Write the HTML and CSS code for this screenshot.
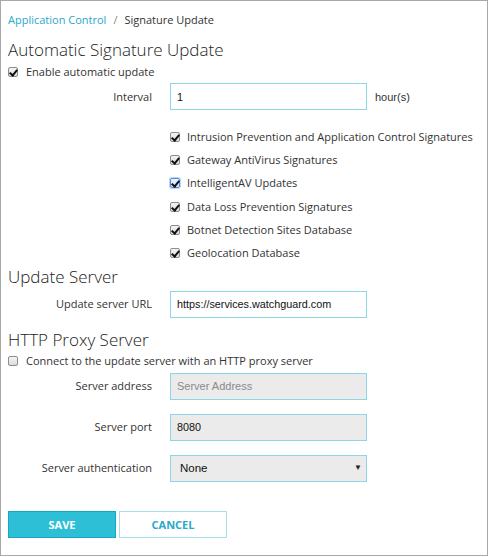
FILE: index.html
```html
<!DOCTYPE html>
<html>
<head>
<meta charset="utf-8">
<link rel="stylesheet" href="styles.css">
</head>
<body>
<div class="page">
  <div class="crumbs"><span class="link">Application Control</span><span class="sep">/</span><span>Signature Update</span></div>

  <h2 class="h first">Automatic Signature Update</h2>
  <div class="check-line"><span class="cb on"></span><span>Enable automatic update</span></div>

  <div class="row interval">
    <label class="lbl">Interval</label>
    <div class="input">1</div>
    <span class="unit">hour(s)</span>
  </div>

  <div class="list">
    <div class="item"><span class="cb on"></span><span>Intrusion Prevention and Application Control Signatures</span></div>
    <div class="item"><span class="cb on"></span><span>Gateway AntiVirus Signatures</span></div>
    <div class="item"><span class="cb on focus"></span><span>IntelligentAV Updates</span></div>
    <div class="item"><span class="cb on"></span><span>Data Loss Prevention Signatures</span></div>
    <div class="item"><span class="cb on"></span><span>Botnet Detection Sites Database</span></div>
    <div class="item"><span class="cb on"></span><span>Geolocation Database</span></div>
  </div>

  <h2 class="h s2">Update Server</h2>
  <div class="row url">
    <label class="lbl">Update server URL</label>
    <div class="input">https://services.watchguard.com</div>
  </div>

  <h2 class="h s3">HTTP Proxy Server</h2>
  <div class="check-line proxy"><span class="cb"></span><span>Connect to the update server with an HTTP proxy server</span></div>

  <div class="row addr">
    <label class="lbl">Server address</label>
    <div class="input disabled placeholder">Server Address</div>
  </div>
  <div class="row port">
    <label class="lbl">Server port</label>
    <div class="input disabled">8080</div>
  </div>
  <div class="row auth">
    <label class="lbl">Server authentication</label>
    <div class="input disabled select"><span class="sel-text">None</span><span class="arrow">&#9660;</span></div>
  </div>

  <div class="buttons">
    <button class="btn save">SAVE</button>
    <button class="btn cancel">CANCEL</button>
  </div>
</div>
</body>
</html>
```

FILE: styles.css
```css
* { box-sizing: border-box; }
html, body { margin: 0; padding: 0; background: #fff; }
body {
  font-family: "Open Sans", "Noto Sans", sans-serif;
  font-size: 11px;
  line-height: 16px;
  color: #333;
}
.page {
  width: 488px;
  height: 556px;
  border: 1px solid #a8a8a8;
  padding: 0 0 0 7px;
  overflow: hidden;
}
.crumbs {
  padding-top: 10px;
  line-height: 18px;
  height: 28px;
}
.crumbs .link { color: #29a6cf; }
.crumbs .sep { color: #888; margin: 0 7px; }
.h {
  margin: 0;
  font-weight: 300;
  font-size: 17px;
  line-height: 24px;
  color: #222;
}
.h.first { margin-top: 9px; }
.check-line {
  display: flex;
  align-items: center;
  height: 17px;
  margin-top: 1px;
}
.check-line .cb { margin-right: 8px; }
.cb {
  display: inline-block;
  width: 10px;
  height: 10px;
  border: 1px solid #8c8c8c;
  border-radius: 2px;
  background: linear-gradient(#f4f4f4, #dcdcdc);
  position: relative;
  flex: none;
}
.cb.on::after {
  content: "";
  position: absolute;
  left: 2px;
  top: 0px;
  width: 3px;
  height: 6px;
  border: solid #111;
  border-width: 0 2px 2px 0;
  transform: rotate(40deg);
}
.cb.focus { border-color: #4a8ee6; box-shadow: 0 0 0 1px #b9d4f7; }
.row {
  display: grid;
  grid-template-columns: 144px 197px auto;
  column-gap: 18px;
  align-items: center;
}
.lbl { text-align: right; color: #333; }
.input {
  height: 27px;
  border: 1px solid #8dd6e8;
  background: #fff;
  font-family: "Liberation Sans", Arial, sans-serif;
  font-size: 10.8px;
  color: #111;
  padding: 0 6px;
  display: flex;
  align-items: center;
}
.input.disabled { background: #ebebeb; }
.input.placeholder { color: #8a8a8a; font-size: 11px; }
.unit {
  font-family: "Liberation Sans", Arial, sans-serif;
  font-size: 11px;
  color: #333;
  margin-left: -10px;
}
.interval { margin-top: 3px; }
.list { margin-left: 162px; margin-top: 15px; }
.item {
  display: flex;
  align-items: center;
  height: 23.33px;
}
.item .cb { margin-right: 7px; }
.h.s2 { margin-top: 0; }
.url { margin-top: 2px; }
.h.s3 { margin-top: 10px; }
.proxy { margin-top: 1px; }
.addr { margin-top: 3px; }
.port { margin-top: 14px; }
.auth { margin-top: 14px; }
.select { justify-content: space-between; padding: 0 4px 0 9px; }
.sel-text { font-size: 11.5px; }
.arrow { font-size: 8px; color: #222; }
.buttons {
  display: flex;
  gap: 3px;
  margin-top: 29px;
}
.btn {
  width: 108px;
  height: 27px;
  font-family: "Open Sans", sans-serif;
  font-weight: 700;
  font-size: 11px;
  padding: 0;
  cursor: pointer;
}
.btn.save {
  background: #2cbfd6;
  border: 1px solid #1aa6c2;
  color: #fff;
}
.btn.cancel {
  background: #fff;
  border: 1px solid #a6e0ee;
  color: #2aa8c8;
}
```
